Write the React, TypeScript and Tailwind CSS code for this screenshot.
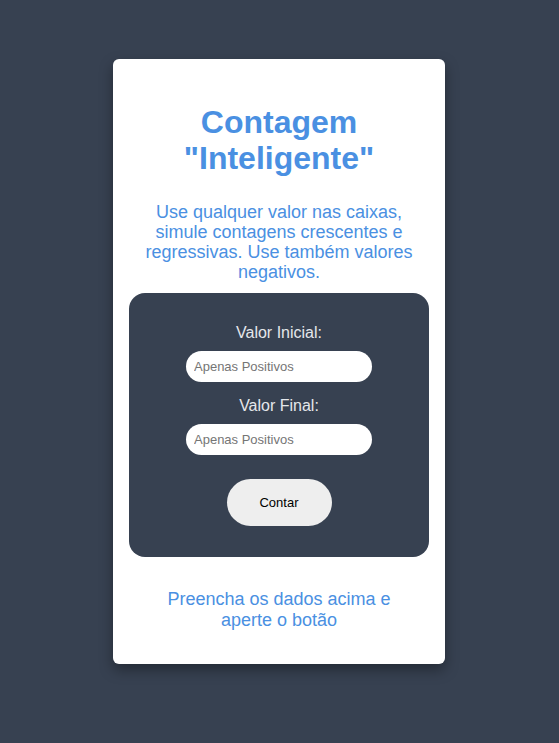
export default function App() {
  return (
    <div
      className="min-h-[743px] w-full bg-[#374151] pt-[59px] pl-[113px]"
      style={{ fontFamily: '"Liberation Sans", Arial, sans-serif' }}
    >
      <div className="w-[332px] h-[605px] bg-white rounded-md shadow-[0_6px_14px_rgba(0,0,0,0.35)] px-4 pt-[45px] flex flex-col items-center">
        <h1 className="text-[32px] leading-[36px] font-bold text-[#4a90e2] text-center">
          Contagem
          <br />
          "Inteligente"
        </h1>
        <p className="mt-[26px] text-[18px] leading-[20px] text-[#4a90e2] text-center px-2">
          Use qualquer valor nas caixas, simule contagens crescentes e regressivas. Use também valores negativos.
        </p>
        <div className="mt-[11px] w-[300px] bg-[#374151] rounded-2xl pt-[31px] pb-[31px] flex flex-col items-center">
          <label className="text-[16px] leading-[18px] text-[#e5e7eb]">Valor Inicial:</label>
          <input
            type="text"
            placeholder="Apenas Positivos"
            className="mt-[9px] w-[186px] h-[31px] rounded-full bg-white px-2 text-[13px] text-black placeholder:text-[#757575] outline-none"
          />
          <label className="mt-[15px] text-[16px] leading-[18px] text-[#e5e7eb]">Valor Final:</label>
          <input
            type="text"
            placeholder="Apenas Positivos"
            className="mt-[9px] w-[186px] h-[31px] rounded-full bg-white px-2 text-[13px] text-black placeholder:text-[#757575] outline-none"
          />
          <button
            type="button"
            className="mt-[24px] w-[105px] h-[47px] rounded-full bg-[#eeeeee] text-[13px] text-black"
          >
            Contar
          </button>
        </div>
        <p className="mt-[32px] text-[18px] leading-[21px] text-[#4a90e2] text-center w-[240px]">
          Preencha os dados acima e aperte o botão
        </p>
      </div>
    </div>
  );
}
